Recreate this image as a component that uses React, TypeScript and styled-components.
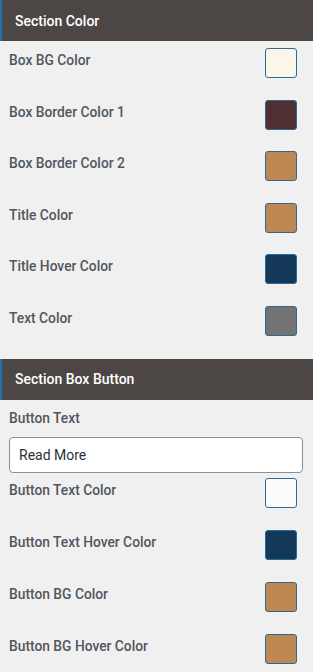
import React from 'react';
import styled, {createGlobalStyle} from 'styled-components';

const GlobalStyle = createGlobalStyle`
  html, body {
    margin: 0;
    padding: 0;
    background: #f0f0f0;
  }
  body {
    font-family: Roboto, 'Liberation Sans', sans-serif;
  }
`

const PanelStyled = styled.div`
  width: 313px;
  min-height: 672px;
  background: #f0f0f0;
`

const SectionHeaderStyled = styled.div`
  height: 41px;
  display: flex;
  align-items: center;
  padding-left: 13px;
  background: #4c4745;
  border-left: 2px solid #2271b1;
  color: #fff;
  font-size: 14px;
  font-weight: 500;
  box-sizing: border-box;
`

interface BodyProps {
    top: number
}
const SectionBodyStyled = styled.div<BodyProps>`
  padding: ${props => props.top}px 16px 0 9px;
  display: flex;
  flex-direction: column;
`

interface RowProps {
    h: number
}
const RowStyled = styled.div<RowProps>`
  display: flex;
  align-items: flex-start;
  justify-content: space-between;
  height: ${props => props.h}px;
`

const LabelStyled = styled.span`
  color: #50575e;
  font-size: 13.8px;
  font-weight: 500;
  line-height: 24px;
`

interface SwatchProps {
    color: string
}
const SwatchStyled = styled.div<SwatchProps>`
  width: 30px;
  height: 28px;
  background: ${props => props.color};
  border: 1px solid #2c6a96;
  border-radius: 3px;
  flex: 0 0 auto;
`

const FieldLabelStyled = styled(LabelStyled)`
  display: block;
  margin-bottom: 7px;
`

const InputStyled = styled.div`
  height: 36px;
  margin-right: -6px;
  margin-bottom: 5px;
  box-sizing: border-box;
  display: flex;
  align-items: center;
  padding-left: 9px;
  background: #fff;
  border: 1px solid #8c8f94;
  border-radius: 4px;
  color: #2c3338;
  font-size: 14px;
`

const colorRows = [
    {label: 'Box BG Color', color: '#fcf6e8'},
    {label: 'Box Border Color 1', color: '#4f2f31'},
    {label: 'Box Border Color 2', color: '#bf8751'},
    {label: 'Title Color', color: '#bf8751'},
    {label: 'Title Hover Color', color: '#143958'},
    {label: 'Text Color', color: '#737373'},
]

const buttonRows = [
    {label: 'Button Text Color', color: '#fbfcfd'},
    {label: 'Button Text Hover Color', color: '#143958'},
    {label: 'Button BG Color', color: '#bf8751'},
    {label: 'Button BG Hover Color', color: '#bf8751'},
]

const ColorRow = ({label, color, h}: {label: string, color: string, h: number}) => (
    <RowStyled h={h}>
        <LabelStyled>{label}</LabelStyled>
        <SwatchStyled color={color}/>
    </RowStyled>
)

function App() {
    return (
        <PanelStyled>
            <GlobalStyle/>
            <SectionHeaderStyled>Section Color</SectionHeaderStyled>
            <SectionBodyStyled top={7}>
                {colorRows.map((r, i) => (
                    <ColorRow key={r.label} label={r.label} color={r.color} h={i === colorRows.length - 1 ? 53 : 51.6}/>
                ))}
            </SectionBodyStyled>
            <SectionHeaderStyled>Section Box Button</SectionHeaderStyled>
            <SectionBodyStyled top={6}>
                <FieldLabelStyled>Button Text</FieldLabelStyled>
                <InputStyled>Read More</InputStyled>
                {buttonRows.map(r => (
                    <ColorRow key={r.label} label={r.label} color={r.color} h={52}/>
                ))}
            </SectionBodyStyled>
        </PanelStyled>
    );
}

export default App;
